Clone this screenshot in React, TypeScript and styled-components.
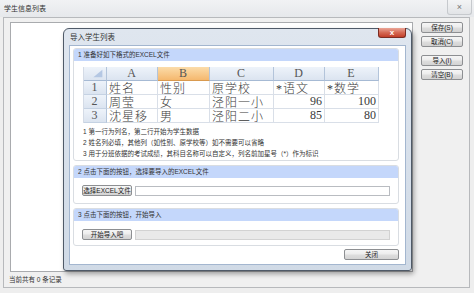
import React from 'react'
import styled, { createGlobalStyle, css } from 'styled-components'

const UI_FONT = `"Liberation Sans", "Noto Sans CJK SC", sans-serif`
const SHEET_FONT = `"Liberation Serif", "Noto Sans CJK SC", serif`

const GlobalStyle = createGlobalStyle`
  html, body { margin: 0; padding: 0; }
  body {
    width: 474px;
    height: 293px;
    overflow: hidden;
    background: #eeeeee;
    font-family: ${UI_FONT};
    color: #2a2a2a;
  }
  * { box-sizing: border-box; }
`

const Screen = styled.div`
  position: relative;
  width: 474px;
  height: 293px;
  display: flex;
  flex-direction: column;
`

const TitleBar = styled.div`
  height: 17px;
  display: flex;
  justify-content: space-between;
  align-items: flex-start;
  padding-left: 4px;
  background: linear-gradient(#f1f2f4, #e6e8eb);
`

const TitleText = styled.span<{ $size?: number }>`
  font-size: ${(p) => p.$size ?? 7}px;
  line-height: 17px;
  color: #333;
  white-space: nowrap;
`

const WinClose = styled.div`
  width: 25px;
  height: 15px;
  margin-right: 2px;
  border: 1px solid #c6c9cd;
  border-top: none;
  border-radius: 0 0 3px 3px;
  background: linear-gradient(#f3f4f5, #e2e4e7);
  display: flex;
  align-items: center;
  justify-content: center;
  font-size: 9px;
  color: #777;
`

const Frame = styled.div`
  flex: 1;
  margin: 0 4px 5px 3px;
  border: 1px solid #b7b9bc;
  background: #f0f0f0;
  display: flex;
  flex-direction: column;
`

const Main = styled.div`
  flex: 1;
  display: flex;
  gap: 8px;
  padding: 4px 6px 0 6px;
`

const ListBox = styled.div`
  flex: 1;
  background: #fff;
  border: 1px solid #a9abae;
`

const SideButtons = styled.div`
  width: 42px;
  display: flex;
  flex-direction: column;
  gap: 3px;
`

const Button = styled.button<{ $w?: number; $gapTop?: number }>`
  width: ${(p) => (p.$w ? `${p.$w}px` : '100%')};
  height: 11px;
  margin-top: ${(p) => p.$gapTop ?? 0}px;
  padding: 0;
  flex-shrink: 0;
  border: 1px solid #8d8f92;
  border-radius: 2px;
  background: linear-gradient(#f6f6f6, #ececec 48%, #dedede 52%, #d3d3d3);
  font-family: ${UI_FONT};
  font-size: 6.5px;
  line-height: 9px;
  color: #222;
  white-space: nowrap;
`

const StatusBar = styled.div`
  height: 15px;
  padding-left: 5px;
  font-size: 6.5px;
  line-height: 15px;
  color: #333;
`

const Dialog = styled.div`
  position: absolute;
  left: 63px;
  top: 28px;
  width: 349px;
  border: 1px solid #4f5a68;
  border-radius: 6px 6px 3px 3px;
  background: linear-gradient(#dfe6ef, #d0dae6);
  box-shadow: 2px 3px 5px rgba(0, 0, 0, 0.35);
  padding: 0 5px 5px 5px;
  display: flex;
  flex-direction: column;
`

const DialogTitle = styled.div`
  height: 16px;
  display: flex;
  justify-content: space-between;
  align-items: flex-start;
  padding-left: 1px;
`

const RedClose = styled.div`
  width: 28px;
  height: 10px;
  margin-top: -1px;
  border: 1px solid #7b2c22;
  border-top: none;
  border-radius: 0 0 3px 3px;
  background: linear-gradient(#eaa597, #d66a55 50%, #c23e29);
  color: #fff;
  font-size: 8px;
  font-weight: bold;
  line-height: 9px;
  text-align: center;
`

const Client = styled.div`
  background: #fff;
  border: 1px solid #a3b6cf;
  padding: 1px 6px 4px 3px;
  display: flex;
  flex-direction: column;
`

const Section = styled.div<{ $top?: number }>`
  margin-top: ${(p) => p.$top ?? 0}px;
  border: 1px solid #d9dde2;
  border-radius: 3px;
  display: flex;
  flex-direction: column;
`

const SectionBar = styled.div`
  height: 12px;
  padding-left: 4px;
  background: #c4d7fb;
  border-radius: 2px 2px 0 0;
  font-size: 6.5px;
  line-height: 12px;
  color: #333;
`

const SectionBody = styled.div<{ $pad: string }>`
  padding: ${(p) => p.$pad};
`

const Row = styled.div`
  display: flex;
  gap: 3px;
  align-items: center;
`

const Field = styled.div<{ $dim?: boolean }>`
  flex: 1;
  height: 10px;
  border: 1px solid ${(p) => (p.$dim ? '#d2d2d2' : '#b9bcc1')};
  background: ${(p) => (p.$dim ? '#e9e9e9' : '#fff')};
`

const Sheet = styled.div`
  display: grid;
  grid-template-columns: 23px 51px 52px 64px 51px 54px;
  grid-auto-rows: 14px;
  width: 295px;
  border-left: 1px solid #d4dbe6;
`

const headCss = css`
  background: linear-gradient(#eef3fa, #dbe4f0);
  border-right: 1px solid #b3c4da;
  border-bottom: 1px solid #a6bad4;
  color: #555;
  font-size: 12px;
  justify-content: center;
`

const Cell = styled.div<{ $kind?: 'head' | 'active' | 'num' | 'rowhead' }>`
  display: flex;
  align-items: center;
  padding: 0 2px;
  font-family: ${SHEET_FONT};
  font-size: 12px;
  font-weight: 300;
  color: #3a3a3a;
  border-right: 1px solid #d9dfe8;
  border-bottom: 1px solid #d9dfe8;
  overflow: hidden;
  white-space: nowrap;
  letter-spacing: 1px;
  ${(p) => p.$kind === 'head' && headCss}
  ${(p) =>
    p.$kind === 'active' &&
    css`
      ${headCss};
      background: linear-gradient(#fbdcaa, #f5b86e);
      border-bottom-color: #d99a4f;
    `}
  ${(p) =>
    p.$kind === 'rowhead' &&
    css`
      ${headCss};
      border-bottom-color: #c5d2e3;
    `}
  ${(p) => p.$kind === 'num' && css`justify-content: flex-end; letter-spacing: 0;`}
`

const Notes = styled.div`
  margin-top: 3px;
  display: flex;
  flex-direction: column;
`

const Note = styled.div`
  height: 11px;
  font-size: 6.5px;
  line-height: 11px;
  color: #333;
  white-space: nowrap;
`

const Footer = styled.div`
  display: flex;
  justify-content: flex-end;
  margin-top: 3px;
`

const Corner = () => (
  <Cell $kind="head">
    <svg width="22" height="13" viewBox="0 0 22 13">
      <polygon points="20,2 20,11 9,11" fill="#b4c7e3" />
    </svg>
  </Cell>
)

const columns = ['A', 'B', 'C', 'D', 'E']
const rows = [
  ['姓名', '性别', '原学校', '*语文', '*数学'],
  ['周莹', '女', '泾阳一小', '96', '100'],
  ['沈星移', '男', '泾阳二小', '85', '80'],
]

const notes = [
  '1 第一行为列名，第二行开始为学生数据',
  '2 姓名列必填，其他列（如性别、原学校等）如不需要可以省略',
  '3 用于分班依据的考试成绩，其科目名称可以自定义，列名前加星号（*）作为标识',
]

const ExcelSample = () => (
  <Sheet>
    <Corner />
    {columns.map((c) => (
      <Cell key={c} $kind={c === 'B' ? 'active' : 'head'}>
        {c}
      </Cell>
    ))}
    {rows.map((r, i) => (
      <React.Fragment key={i}>
        <Cell $kind="rowhead">{i + 1}</Cell>
        {r.map((v, j) => (
          <Cell key={j} $kind={/^\d+$/.test(v) ? 'num' : undefined}>
            {v}
          </Cell>
        ))}
      </React.Fragment>
    ))}
  </Sheet>
)

const ImportDialog = () => (
  <Dialog>
    <DialogTitle>
      <TitleText $size={7.5}>导入学生列表</TitleText>
      <RedClose>x</RedClose>
    </DialogTitle>
    <Client>
      <Section $top={1}>
        <SectionBar>1 准备好如下格式的EXCEL文件</SectionBar>
        <SectionBody $pad="6px 0 1px 9px">
          <ExcelSample />
          <Notes>
            {notes.map((n) => (
              <Note key={n}>{n}</Note>
            ))}
          </Notes>
        </SectionBody>
      </Section>

      <Section $top={4}>
        <SectionBar>2 点击下面的按钮，选择要导入的EXCEL文件</SectionBar>
        <SectionBody $pad="7px 8px 7px 8px">
          <Row>
            <Button $w={50}>选择EXCEL文件</Button>
            <Field />
          </Row>
        </SectionBody>
      </Section>

      <Section $top={4}>
        <SectionBar>3 点击下面的按钮，开始导入</SectionBar>
        <SectionBody $pad="8px 8px 5px 8px">
          <Row>
            <Button $w={50}>开始导入吧</Button>
            <Field $dim />
          </Row>
        </SectionBody>
      </Section>

      <Footer>
        <Button $w={55}>关闭</Button>
      </Footer>
    </Client>
  </Dialog>
)

export default function App() {
  return (
    <Screen>
      <GlobalStyle />
      <TitleBar>
        <TitleText>学生信息列表</TitleText>
        <WinClose>×</WinClose>
      </TitleBar>
      <Frame>
        <Main>
          <ListBox />
          <SideButtons>
            <Button>保存(S)</Button>
            <Button>取消(C)</Button>
            <Button $gapTop={5}>导入(I)</Button>
            <Button>清空(B)</Button>
          </SideButtons>
        </Main>
        <StatusBar>当前共有 0 条记录</StatusBar>
      </Frame>
      <ImportDialog />
    </Screen>
  )
}
